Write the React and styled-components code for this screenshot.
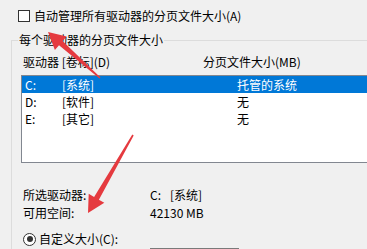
import React from 'react'
import styled, { createGlobalStyle } from 'styled-components'

const GlobalStyle = createGlobalStyle`
  html, body {
    margin: 0;
    padding: 0;
    background: #f0f0f0;
  }
  body {
    font-family: "Noto Sans CJK SC", "Microsoft YaHei", sans-serif;
    font-size: 12px;
    color: #000;
  }
`

const drives = [
  { letter: 'C:', label: '[系统]', size: '托管的系统', selected: true },
  { letter: 'D:', label: '[软件]', size: '无' },
  { letter: 'E:', label: '[其它]', size: '无' }
]

const App = () => {
  return (
    <>
      <GlobalStyle />
      <Page>
        <CheckRow>
          <CheckBox />
          <span>自动管理所有驱动器的分页文件大小(A)</span>
        </CheckRow>

        <Group>
          <GroupTitle>每个驱动器的分页文件大小</GroupTitle>
          <HeaderRow>
            <span>驱动器 [卷标](D)</span>
            <span>分页文件大小(MB)</span>
          </HeaderRow>

          <ListBox>
            {drives.map(d => (
              <DriveRow key={d.letter} selected={d.selected}>
                <span>{d.letter}</span>
                <span>{d.label}</span>
                <span>{d.size}</span>
              </DriveRow>
            ))}
          </ListBox>

          <InfoGrid>
            <span>所选驱动器:</span>
            <span>
              <Letter>C:</Letter>[系统]
            </span>
            <span>可用空间:</span>
            <span>42130 MB</span>
          </InfoGrid>

          <RadioRow>
            <Radio checked />
            <span>自定义大小(C):</span>
          </RadioRow>

          <FieldRow>
            <TextBox />
          </FieldRow>
        </Group>

        <Arrows viewBox="0 0 367 249">
          <polygon points="48,32 66.7,36.4 62.6,41.1 100.5,77.4 99.5,78.6 59,45.3 54.9,50" />
          <polygon points="88,213 104.3,202.8 98.9,199.7 133.7,135.4 132.3,134.6 94.1,196.9 88.7,193.8" />
        </Arrows>
      </Page>
    </>
  )
}

const Page = styled.div`
  position: relative;
  width: 367px;
  height: 249px;
  overflow: hidden;
  background: #f0f0f0;
`
const CheckRow = styled.div`
  display: flex;
  align-items: center;
  gap: 4px;
  height: 16px;
  line-height: 16px;
  margin-top: 8px;
  padding-left: 18px;
`
const CheckBox = styled.span`
  width: 12px;
  height: 12px;
  box-sizing: border-box;
  border: 1px solid #333;
  background: #fff;
`
const Group = styled.fieldset`
  box-sizing: border-box;
  width: 420px;
  height: 260px;
  margin: 8px 0 0 11px;
  padding: 0 0 0 9px;
  min-width: 0;
  border: 1px solid #dcdcdc;
`
const GroupTitle = styled.legend`
  padding: 0 1px;
  margin-left: -3px;
  line-height: 16px;
`
const HeaderRow = styled.div`
  display: grid;
  grid-template-columns: 180px 1fr;
  line-height: 16px;
  margin-top: 6px;
  padding-left: 2px;
`
const ListBox = styled.div`
  box-sizing: border-box;
  width: 380px;
  height: 88px;
  margin-top: 5px;
  border: 1px solid #828790;
  background: #fff;
`
const DriveRow = styled.div`
  display: grid;
  grid-template-columns: 37px 175px 1fr;
  height: 17px;
  line-height: 17px;
  padding-left: 3px;
  background: ${({ selected }) => (selected ? '#0078d7' : 'transparent')};
  color: ${({ selected }) => (selected ? '#fff' : '#000')};
`
const InfoGrid = styled.div`
  display: grid;
  grid-template-columns: 127px 1fr;
  line-height: 18px;
  margin-top: 23px;
  padding-left: 2px;
`
const Letter = styled.span`
  display: inline-block;
  width: 20px;
`
const RadioRow = styled.div`
  display: flex;
  align-items: center;
  gap: 3px;
  height: 16px;
  line-height: 16px;
  margin-top: 9px;
  padding-left: 2px;
`
const Radio = styled.span`
  position: relative;
  width: 13px;
  height: 13px;
  box-sizing: border-box;
  border: 1px solid #333;
  border-radius: 50%;
  background: #fff;
  &::after {
    content: '';
    display: ${({ checked }) => (checked ? 'block' : 'none')};
    position: absolute;
    left: 2.5px;
    top: 2.5px;
    width: 6px;
    height: 6px;
    border-radius: 50%;
    background: #333;
  }
`
const FieldRow = styled.div`
  display: flex;
  margin-top: 1px;
  padding-left: 129px;
`
const TextBox = styled.div`
  box-sizing: border-box;
  width: 89px;
  height: 21px;
  border: 1px solid #7a7a7a;
  background: #fff;
`
const Arrows = styled.svg`
  position: absolute;
  left: 0;
  top: 0;
  width: 367px;
  height: 249px;
  pointer-events: none;
  fill: #e53a3f;
`

export default App
